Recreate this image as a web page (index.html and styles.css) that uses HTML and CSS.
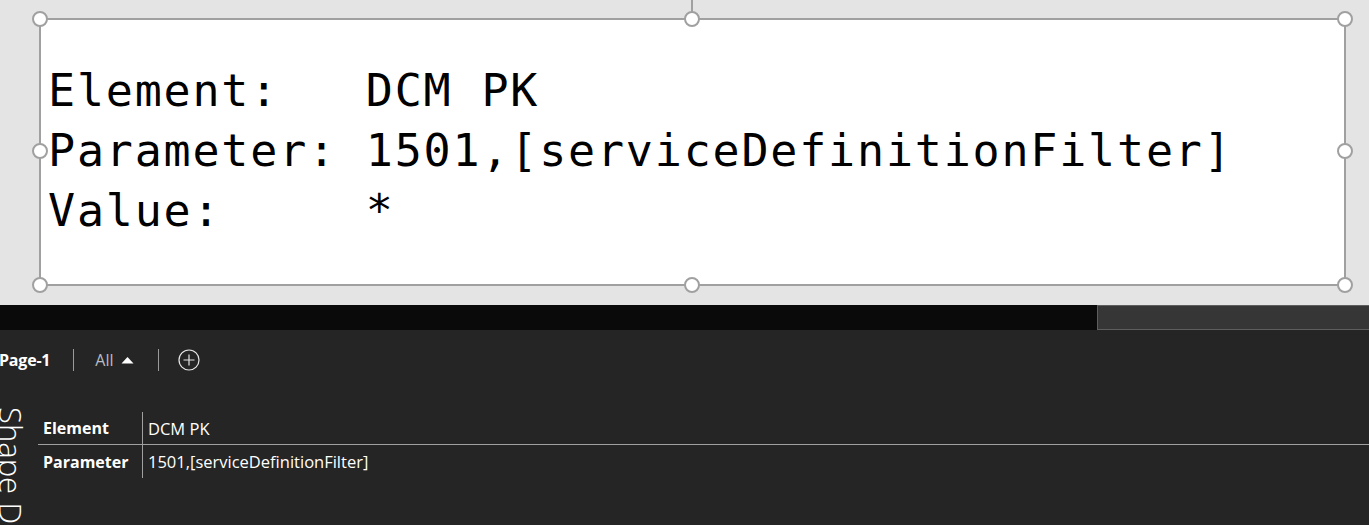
FILE: index.html
```html
<!DOCTYPE html>
<html>
<head>
<meta charset="utf-8">
<link rel="stylesheet" href="styles.css">
</head>
<body>
<div class="canvas">
  <div class="connector"></div>
  <div class="shape">
    <pre class="shape-text">Element:   DCM PK
Parameter: 1501,[serviceDefinitionFilter]
Value:     *</pre>
    <span class="handle h-tl"></span>
    <span class="handle h-tm"></span>
    <span class="handle h-tr"></span>
    <span class="handle h-ml"></span>
    <span class="handle h-mr"></span>
    <span class="handle h-bl"></span>
    <span class="handle h-bm"></span>
    <span class="handle h-br"></span>
  </div>
</div>
<div class="topbar">
  <div class="topbar-left"></div>
  <div class="topbar-right"></div>
</div>
<div class="panel">
  <div class="vertical-title">Shape Data</div>
  <div class="toolbar">
    <span class="page-name">Page-1</span>
    <span class="sep sep-1"></span>
    <span class="filter">All <svg class="caret" width="13" height="8" viewBox="0 0 13 8"><path d="M0.5 7.5 L6.5 1 L12.5 7.5 Z" fill="#ffffff"/></svg></span>
    <span class="sep sep-2"></span>
    <svg class="add" width="22" height="22" viewBox="0 0 22 22"><circle cx="11" cy="11" r="10" fill="none" stroke="#e6e6e6" stroke-width="1.2"/><path d="M11 5.5 V16.5 M5.5 11 H16.5" stroke="#e6e6e6" stroke-width="1.2"/></svg>
  </div>
  <div class="data-table">
    <div class="row row-first">
      <div class="key">Element</div>
      <div class="val">DCM PK</div>
    </div>
    <div class="row">
      <div class="key">Parameter</div>
      <div class="val">1501,[serviceDefinitionFilter]</div>
    </div>
  </div>
</div>
</body>
</html>
```

FILE: styles.css
```css
html, body {
  margin: 0;
  padding: 0;
  width: 1369px;
  height: 525px;
  overflow: hidden;
  background: #252525;
}

.canvas {
  position: relative;
  height: 305px;
  background: #e4e4e4;
  padding: 18px 0 0 39px;
  box-sizing: border-box;
}

.connector {
  position: absolute;
  left: 691px;
  top: 0;
  width: 2px;
  height: 12px;
  background: #a0a0a0;
}

.shape {
  position: relative;
  width: 1307px;
  height: 268px;
  box-sizing: border-box;
  border: 2px solid #a0a0a0;
  background: #ffffff;
  padding: 41px 0 0 7px;
}

.shape-text {
  margin: 0;
  font-family: "DejaVu Sans Mono", monospace;
  font-size: 45px;
  letter-spacing: 1.8px;
  line-height: 60px;
  color: #000000;
  white-space: pre;
}

.handle {
  position: absolute;
  width: 12px;
  height: 12px;
  border: 2px solid #a0a0a0;
  border-radius: 50%;
  background: #ffffff;
  box-sizing: content-box;
}

.h-tl { left: -9px; top: -9px; }
.h-tm { left: 643px; top: -9px; }
.h-tr { right: -9px; top: -9px; }
.h-ml { left: -9px; top: 123px; }
.h-mr { right: -9px; top: 123px; }
.h-bl { left: -9px; bottom: -9px; }
.h-bm { left: 643px; bottom: -9px; }
.h-br { right: -9px; bottom: -9px; }

.topbar {
  display: flex;
  height: 25px;
  background: #0a0a0a;
}

.topbar-left {
  width: 1097px;
}

.topbar-right {
  flex: 1;
  background: #363636;
  border: 1px solid #5e5e5e;
  border-right: none;
}

.panel {
  position: relative;
  height: 195px;
  overflow: hidden;
  background: #252525;
  font-family: "Open Sans", "Noto Sans", sans-serif;
  color: #ffffff;
}

.toolbar {
  display: flex;
  align-items: center;
  height: 24px;
  padding-top: 18px;
  margin-left: -1px;
}

.page-name {
  font-weight: 700;
  font-size: 16px;
  letter-spacing: -0.2px;
}

.sep {
  width: 1px;
  height: 22px;
  background: #9a9a9a;
}

.sep-1 {
  margin: 0 21px 0 23px;
}

.sep-2 {
  margin: 0 19px 0 24px;
}

.filter {
  display: flex;
  align-items: center;
  gap: 7px;
  font-size: 16px;
  color: #b8bcc4;
}

.caret {
  margin-top: -1px;
}

.vertical-title {
  position: absolute;
  left: -5px;
  top: 77px;
  font-size: 31px;
  font-weight: 300;
  line-height: 31px;
  white-space: nowrap;
  transform-origin: 0 0;
  transform: translateX(31px) rotate(90deg);
  color: #ffffff;
}

.data-table {
  margin: 40px 0 0 38px;
}

.row {
  display: flex;
  height: 33px;
  align-items: center;
}

.row-first {
  border-bottom: 1px solid #a0a0a0;
  height: 32px;
}

.key {
  width: 105px;
  box-sizing: border-box;
  padding-left: 5px;
  font-weight: 700;
  font-size: 16px;
  height: 100%;
  display: flex;
  align-items: center;
  border-right: 1px solid #a0a0a0;
}

.val {
  padding-left: 5px;
  font-size: 16.5px;
  color: #ffffff;
}
```
